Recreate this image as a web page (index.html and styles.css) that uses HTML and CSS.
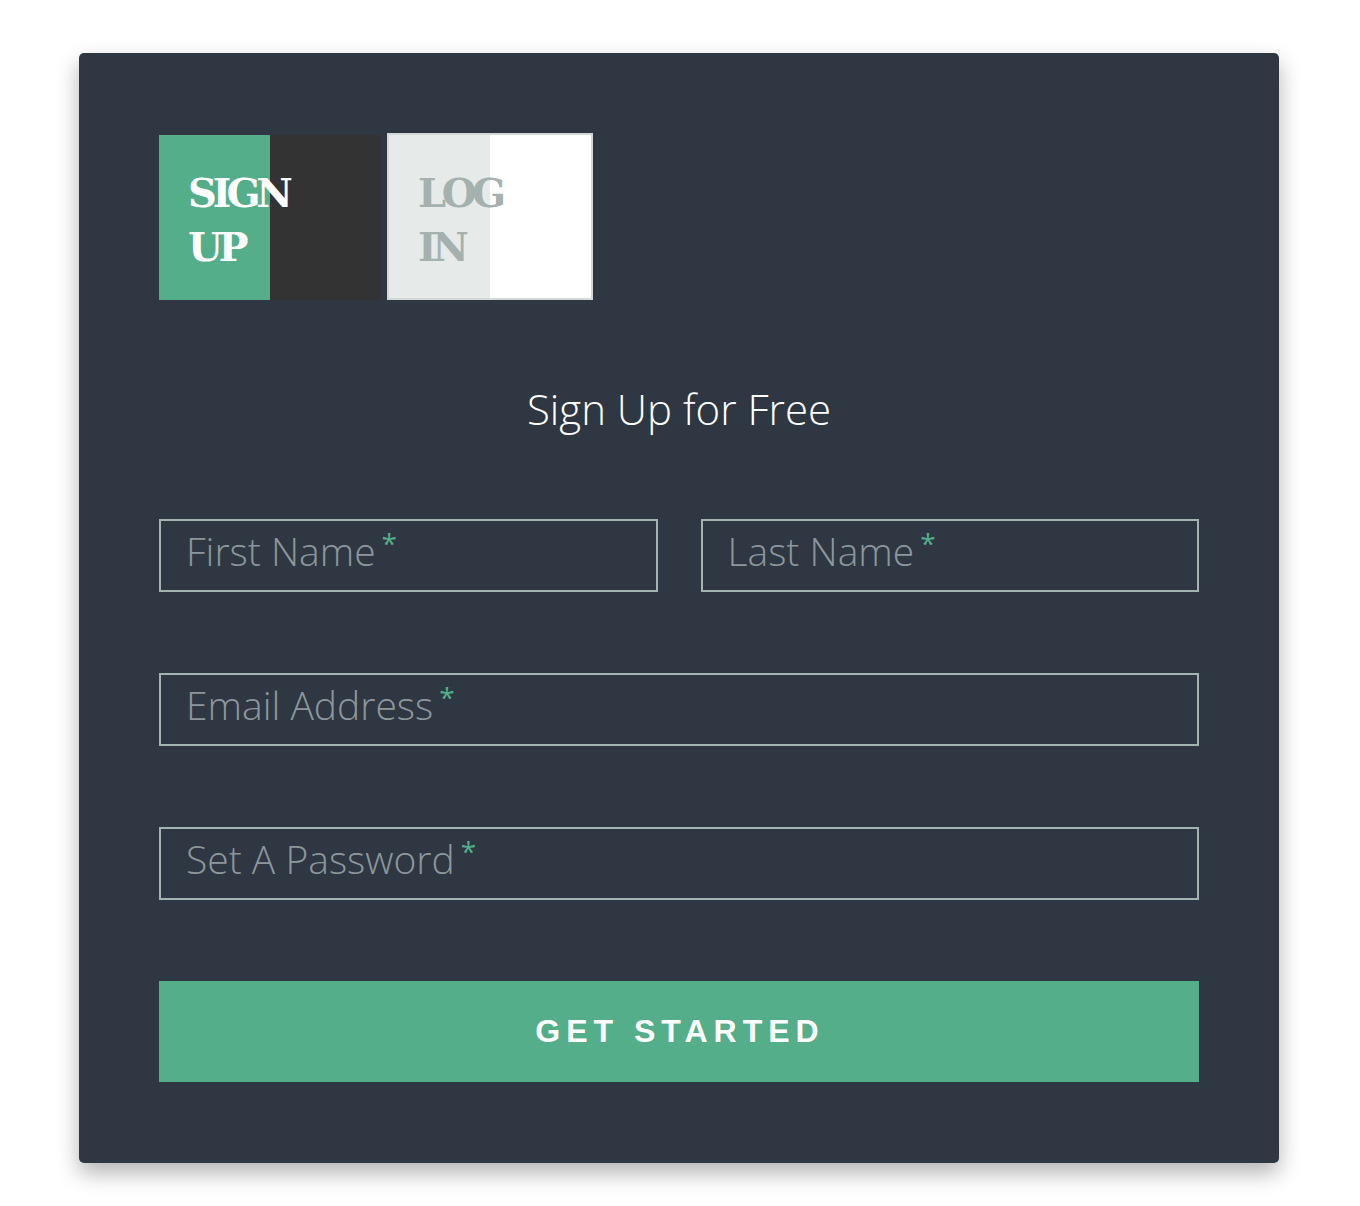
FILE: index.html
```html
<!DOCTYPE html>
<html>
<head>
<meta charset="utf-8">
<link rel="stylesheet" href="styles.css">
</head>
<body>
<div class="card">
  <div class="tabs">
    <div class="tab tab-signup">SIGN<br>UP</div>
    <div class="tab tab-login">LOG<br>IN</div>
  </div>
  <h1 class="title">Sign Up for Free</h1>
  <div class="row two">
    <div class="field"><span class="ph">First Name</span><span class="req">*</span></div>
    <div class="field"><span class="ph">Last Name</span><span class="req">*</span></div>
  </div>
  <div class="row">
    <div class="field"><span class="ph">Email Address</span><span class="req">*</span></div>
  </div>
  <div class="row">
    <div class="field"><span class="ph">Set A Password</span><span class="req">*</span></div>
  </div>
  <button class="btn">GET STARTED</button>
</div>
</body>
</html>
```

FILE: styles.css
```css
html, body { margin: 0; padding: 0; background: #ffffff; }
body { padding: 53px 0 60px 79px; }
.card {
  width: 1200px;
  box-sizing: border-box;
  background: #2e3742;
  border-radius: 5px;
  padding: 80px 80px 81px 80px;
  box-shadow: 0 10px 22px rgba(0, 0, 0, 0.3);
}
.tabs { display: flex; align-items: flex-end; gap: 6px; height: 167px; }
.tab {
  box-sizing: border-box;
  font-family: "DejaVu Serif", serif;
  font-weight: bold;
  font-size: 40px;
  line-height: 54px;
  letter-spacing: -4.5px;
  padding-top: 31px;
  padding-left: 29px;
}
.tab-signup {
  width: 222px;
  height: 165px;
  color: #ffffff;
  background: linear-gradient(to right, #53ae89 0, #53ae89 111px, #333333 111px);
}
.tab-login {
  width: 206px;
  height: 167px;
  border: 2px solid #d3d8d7;
  padding-top: 31px;
  color: #a4b1ae;
  background: linear-gradient(to right, #e6eae9 0, #e6eae9 101px, #ffffff 101px);
}
.title {
  margin: 0;
  height: 219px;
  box-sizing: border-box;
  padding-top: 82px;
  text-align: center;
  font-family: "Open Sans", sans-serif;
  font-weight: 300;
  font-size: 42px;
  line-height: 54px;
  color: #ffffff;
}
.row { display: flex; gap: 43px; margin-bottom: 81px; }
.field {
  flex: 1;
  height: 73px;
  box-sizing: border-box;
  border: 2px solid #a3b3b0;
  padding: 0 0 0 25px;
  font-family: "Open Sans", sans-serif;
  font-weight: 300;
  font-size: 39px;
  line-height: 45px;
  color: #8d979b;
  white-space: nowrap;
}
.req {
  color: #53ae89;
  font-size: 28px;
  vertical-align: 12px;
  margin-left: 6px;
  font-weight: 400;
}
.btn {
  display: block;
  width: 100%;
  height: 101px;
  border: 0;
  margin: 0;
  background: #53ae89;
  color: #ffffff;
  font-family: "Liberation Sans", Arial, sans-serif;
  font-weight: bold;
  font-size: 32px;
  letter-spacing: 6px;
  padding: 0 0 0 2px;
}
```
